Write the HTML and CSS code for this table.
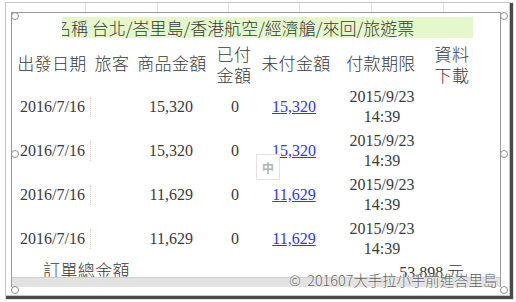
FILE: index.html
```html
<!DOCTYPE html>
<html lang="zh-Hant">
<head>
<meta charset="utf-8">
<title>訂單</title>
<link rel="stylesheet" href="styles.css">
</head>
<body>
<div class="shot">
  <div class="gutter-top">
    <i class="vt" style="left:79px"></i><i class="vt" style="left:151px"></i><i class="vt" style="left:222px"></i><i class="vt" style="left:293px"></i><i class="vt" style="left:365px"></i><i class="vt" style="left:437px"></i>
  </div>
  <div class="middle">
    <div class="gutter-side"></div>
    <div class="frame">
      <div class="content">
        <div class="titlebar">名稱 台北/峇里島/香港航空/經濟艙/來回/旅遊票</div>
        <div class="grid">
          <div class="hd">出發日期</div>
          <div class="hd">旅客</div>
          <div class="hd">商品金額</div>
          <div class="hd two">已付<br>金額</div>
          <div class="hd">未付金額</div>
          <div class="hd">付款期限</div>
          <div class="hd two">資料<br>下載</div>

          <div class="td date">2016/7/16</div><div class="td"></div><div class="td num">15,320</div><div class="td zero">0</div><div class="td link"><a href="#">15,320</a></div><div class="td due">2015/9/23<br>14:39</div><div class="td"></div>
          <div class="td date">2016/7/16</div><div class="td"></div><div class="td num">15,320</div><div class="td zero">0</div><div class="td link"><a href="#">15,320</a></div><div class="td due">2015/9/23<br>14:39</div><div class="td"></div>
          <div class="td date">2016/7/16</div><div class="td"></div><div class="td num">11,629</div><div class="td zero">0</div><div class="td link"><a href="#">11,629</a></div><div class="td due">2015/9/23<br>14:39</div><div class="td"></div>
          <div class="td date">2016/7/16</div><div class="td"></div><div class="td num">11,629</div><div class="td zero">0</div><div class="td link"><a href="#">11,629</a></div><div class="td due">2015/9/23<br>14:39</div><div class="td"></div>

          <div class="total-label">訂單總金額</div>
          <div class="total-value"><span class="serif">53,898</span> 元</div>
        </div>
      </div>
      <div class="hbar"></div>
    </div>
    <div class="gutter-side"></div>
  </div>

  <span class="handle" style="left:5px;top:9px"></span>
  <span class="handle" style="left:494px;top:9px"></span>
  <span class="handle" style="left:5px;top:147px"></span>
  <span class="handle" style="left:494px;top:147px"></span>
  <span class="handle" style="left:5px;top:283px"></span>
  <span class="handle" style="left:494px;top:283px"></span>

  <div class="ime">中</div>
  <div class="watermark">©&nbsp; 201607大手拉小手前進峇里島</div>
</div>
</body>
</html>
```

FILE: styles.css
```css
html, body {
  margin: 0;
  padding: 0;
  background: #ffffff;
}
body {
  width: 516px;
  height: 302px;
  overflow: hidden;
  font-family: "Noto Sans CJK TC", "Noto Sans", sans-serif;
  color: #3a3a3a;
}
.shot {
  position: relative;
  box-sizing: border-box;
  margin: 2px 0 0 5px;
  width: 505px;
  height: 294px;
  border: 1px solid #c6c6c6;
  box-shadow: 2px 2px 1px 1px #4a4a4a;
  background: #fff;
  display: flex;
  flex-direction: column;
}
.gutter-top {
  position: relative;
  height: 9px;
}
.vt {
  position: absolute;
  top: 0;
  width: 1px;
  height: 9px;
  background: #dedede;
}
.middle {
  display: flex;
  height: 275px;
}
.gutter-side {
  width: 5px;
}
.gutter-side:last-child {
  width: 8px;
}
.frame {
  box-sizing: border-box;
  width: 491px;
  border: 1px solid #9a9a9a;
  border-bottom: none;
  display: flex;
  flex-direction: column;
}
.content {
  height: 265px;
  overflow: hidden;
  padding-top: 4px;
  box-sizing: border-box;
}
.titlebar {
  margin-left: 50px;
  width: 411px;
  height: 21px;
  background: #e4f8cb;
  overflow: hidden;
  white-space: nowrap;
  font-size: 17px;
  font-weight: 300;
  line-height: 21px;
  text-indent: -8px;
  color: #383838;
}
.grid {
  display: grid;
  grid-template-columns: 80px 40px 80px 44px 80px 90px 52px;
  grid-auto-rows: 44px;
  grid-template-rows: 46px;
  margin-top: 1px;
}
.hd {
  display: flex;
  align-items: center;
  justify-content: center;
  text-align: center;
  font-size: 17px;
  font-weight: 300;
  letter-spacing: 0.4px;
  line-height: 21px;
  color: #383838;
  white-space: nowrap;
}
.hd.two {
  padding-top: 4px;
}
.td {
  display: flex;
  align-items: center;
  justify-content: center;
  font-family: "Liberation Serif", "Times New Roman", serif;
  font-size: 16px;
  line-height: 20px;
  color: #3a3a3a;
  text-align: center;
}
.td.date {
  justify-content: flex-start;
  padding-left: 8px;
  border-right: 1px dotted #f0c9a0;
  margin: 12px 0;
  width: 79px;
  box-sizing: border-box;
}
.td.num {
  justify-content: flex-end;
  padding-right: 19px;
}
.td.zero {
  padding-left: 2px;
}
.td.link a {
  color: #3434f2;
  text-decoration: underline;
  margin-left: -4px;
}
.td.due {
  padding-left: 2px;
}
.total-label {
  grid-column: 1 / 5;
  padding-left: 31px;
  font-size: 17px;
  font-weight: 300;
  letter-spacing: 0.4px;
  line-height: 18px;
  padding-top: 0;
  color: #383838;
}
.total-value {
  grid-column: 5 / 8;
  text-align: right;
  padding-right: 14px;
  font-size: 17px;
  font-weight: 300;
  line-height: 18px;
  padding-top: 1px;
  color: #383838;
}
.serif {
  font-family: "Liberation Serif", "Times New Roman", serif;
  font-size: 16px;
  font-weight: 400;
}
.hbar {
  height: 9px;
  background: #e2e2e2;
  border-top: 1px solid #cfcfcf;
}
.handle {
  position: absolute;
  width: 8px;
  height: 8px;
  border: 1px solid #8e8e8e;
  border-radius: 50%;
  background: transparent;
  box-sizing: border-box;
}
.ime {
  position: absolute;
  left: 250px;
  top: 151px;
  width: 24px;
  height: 26px;
  box-sizing: border-box;
  border: 1px solid #e2e2e2;
  background: #fff;
  color: #b4b4b4;
  font-size: 12px;
  font-weight: bold;
  display: flex;
  align-items: center;
  justify-content: center;
}
.watermark {
  position: absolute;
  left: 283px;
  top: 269px;
  font-size: 14.4px;
  font-weight: 300;
  line-height: 16px;
  color: #5e5e5e;
  white-space: nowrap;
  text-shadow: 0 0 2px #fff, 0 0 1px #fff;
}
```
